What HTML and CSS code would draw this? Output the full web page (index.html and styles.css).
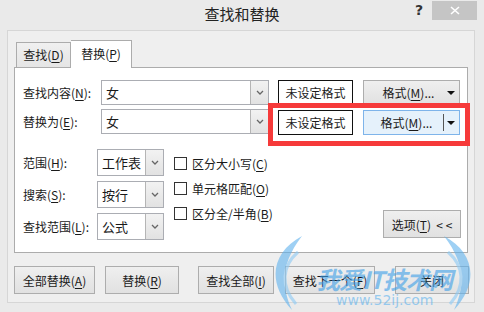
FILE: index.html
```html
<!DOCTYPE html>
<html lang="zh-CN">
<head>
    <meta charset="UTF-8">
    <title>查找和替换</title>
    <link rel="stylesheet" href="styles.css">
</head>
<body>
    <div class="window">
        <div class="titlebar">
            <span></span>
            <span class="title">查找和替换</span>
            <div class="caption-btns">
                <span class="help">?</span>
                <span class="close">
                    <svg width="10" height="9" viewBox="0 0 10 9"><path d="M1 1 L9 8 M9 1 L1 8" stroke="#fff" stroke-width="1.6"/></svg>
                </span>
            </div>
        </div>
        <div class="panel">
            <div class="tabs">
                <div class="tab">查找(<u>D</u>)</div>
                <div class="tab active">替换(<u>P</u>)</div>
            </div>
            <div class="sheet">
                <div class="find-grid">
                    <label>查找内容(<u>N</u>):</label>
                    <div class="combo"><span>女</span><i class="drop"><svg width="8" height="5" viewBox="0 0 8 5"><path d="M1 1 L4 4 L7 1" fill="none" stroke="#666" stroke-width="1.3"/></svg></i></div>
                    <div class="fmt-box">未设定格式</div>
                    <div class="split-btn"><span>格式(<u>M</u>)...</span><i class="tri"></i></div>

                    <label>替换为(<u>E</u>):</label>
                    <div class="combo"><span>女</span><i class="drop"><svg width="8" height="5" viewBox="0 0 8 5"><path d="M1 1 L4 4 L7 1" fill="none" stroke="#666" stroke-width="1.3"/></svg></i></div>
                    <div class="fmt-box low">未设定格式</div>
                    <div class="split-btn hover low"><span>格式(<u>M</u>)...</span><i class="sep"></i><i class="tri"></i></div>
                </div>
                <div class="options">
                    <div class="selects">
                        <label>范围(<u>H</u>):</label>
                        <div class="combo"><span>工作表</span><i class="drop"><svg width="8" height="5" viewBox="0 0 8 5"><path d="M1 1 L4 4 L7 1" fill="none" stroke="#666" stroke-width="1.3"/></svg></i></div>
                        <label>搜索(<u>S</u>):</label>
                        <div class="combo"><span>按行</span><i class="drop"><svg width="8" height="5" viewBox="0 0 8 5"><path d="M1 1 L4 4 L7 1" fill="none" stroke="#666" stroke-width="1.3"/></svg></i></div>
                        <label>查找范围(<u>L</u>):</label>
                        <div class="combo"><span>公式</span><i class="drop"><svg width="8" height="5" viewBox="0 0 8 5"><path d="M1 1 L4 4 L7 1" fill="none" stroke="#666" stroke-width="1.3"/></svg></i></div>
                    </div>
                    <div class="checks">
                        <div class="check"><i class="box"></i><span>区分大小写(<u>C</u>)</span></div>
                        <div class="check"><i class="box"></i><span>单元格匹配(<u>O</u>)</span></div>
                        <div class="check"><i class="box"></i><span>区分全/半角(<u>B</u>)</span></div>
                    </div>
                    <button class="btn opt-btn">选项(<u>T</u>)&nbsp; &lt; &lt;</button>
                </div>
            </div>
            <div class="actions">
                <button class="btn b1">全部替换(<u>A</u>)</button>
                <button class="btn b2">替换(<u>R</u>)</button>
                <button class="btn b3">查找全部(<u>I</u>)</button>
                <button class="btn b4">查找下一个(<u>F</u>)</button>
                <button class="btn b5">关闭</button>
            </div>
        </div>
        <div class="highlight"></div>
        <div class="watermark">
            <svg class="wing left" width="44" height="80" viewBox="0 0 44 80"><path d="M40 4 C10 20 4 50 30 78 C18 52 20 30 40 4 Z" fill="#5fb2ee"/><path d="M36 20 C20 34 18 54 34 72" fill="none" stroke="#8ccaf5" stroke-width="3"/></svg>
            <svg class="wing right" width="44" height="80" viewBox="0 0 44 80"><path d="M4 4 C34 20 40 50 14 78 C26 52 24 30 4 4 Z" fill="#5fb2ee"/><path d="M8 20 C24 34 26 54 10 72" fill="none" stroke="#8ccaf5" stroke-width="3"/></svg>
            <span class="wm-title">我爱IT技术网</span>
            <span class="wm-url">www.52ij.com</span>
        </div>
    </div>
</body>
</html>
```

FILE: styles.css
```css
body {
    margin: 0;
    padding: 0;
    background-color: #ececec;
    font-family: "Noto Sans CJK SC", "Noto Sans", sans-serif;
    font-size: 12px;
    color: #1a1a1a;
}
u {
    text-decoration: underline;
    text-underline-offset: 2px;
}
.window {
    position: relative;
    width: 484px;
    height: 312px;
    overflow: hidden;
    background-color: #eaeaea;
}
.titlebar {
    height: 30px;
    display: grid;
    grid-template-columns: 1fr auto 1fr;
}
.title {
    font-size: 15px;
    line-height: 28px;
    color: #222;
}
.caption-btns {
    display: flex;
    justify-content: flex-end;
    align-items: flex-start;
}
.help {
    font-family: "DejaVu Sans", sans-serif;
    font-weight: bold;
    font-size: 14px;
    line-height: 20px;
    margin-right: 9px;
    color: #333;
}
.close {
    width: 45px;
    height: 19px;
    margin-top: 1px;
    margin-right: 7px;
    background-color: #c5c5c5;
    display: flex;
    align-items: center;
    justify-content: center;
}
.panel {
    margin-left: 7px;
    width: 466px;
    height: 271px;
    border: 1px solid #d6d6d6;
    background-color: #efefef;
}
.tabs {
    display: flex;
    align-items: flex-end;
    padding: 9px 0 0 8px;
    height: 27px;
    position: relative;
    z-index: 1;
}
.tab {
    box-sizing: border-box;
    width: 55px;
    height: 25px;
    border: 1px solid #acacac;
    border-bottom: none;
    background: linear-gradient(#f0f0f0, #e5e5e5);
    text-align: center;
    line-height: 24px;
}
.tab.active {
    width: 61px;
    height: 28px;
    background: #fff;
    border-left: none;
    margin-bottom: -1px;
    line-height: 26px;
}
.sheet {
    box-sizing: border-box;
    margin-left: 6px;
    width: 454px;
    height: 186px;
    border: 1px solid #acacac;
    background-color: #fff;
    padding: 12px 0 0 8px;
}
.find-grid {
    display: grid;
    grid-template-columns: 78px 168px 84px 107px;
    grid-template-rows: 25px 25px;
    row-gap: 4px;
    align-items: center;
}
.find-grid label {
    line-height: 25px;
}
.combo {
    box-sizing: border-box;
    height: 100%;
    border: 1px solid #abadb3;
    background-color: #fff;
    display: flex;
    align-items: stretch;
}
.combo span {
    flex: 1;
    padding-left: 4px;
    line-height: 23px;
    font-size: 13px;
}
.drop {
    width: 17px;
    background: linear-gradient(#f2f2f2, #e2e2e2);
    border-left: 1px solid #b5b5b5;
    display: flex;
    align-items: center;
    justify-content: center;
}
.fmt-box {
    box-sizing: border-box;
    margin-left: 9px;
    width: 75px;
    height: 25px;
    border: 1px solid #111;
    text-align: center;
    line-height: 23px;
}
.fmt-box.low {
    align-self: end;
    transform: translateY(1px);
}
.split-btn {
    box-sizing: border-box;
    margin-left: 10px;
    width: 97px;
    height: 25px;
    border: 1px solid #adadad;
    background: linear-gradient(#efefef, #e1e1e1);
    display: flex;
    align-items: center;
    position: relative;
}
.split-btn span {
    flex: 1;
    text-align: center;
    padding-left: 6px;
}
.split-btn.hover {
    background: #e5f1fb;
    border-color: #7eb4ea;
}
.split-btn.low {
    transform: translateY(1px);
}
.sep {
    width: 1px;
    height: 17px;
    background-color: #555;
    margin-right: 3px;
}
.tri {
    width: 0;
    height: 0;
    border-left: 4px solid transparent;
    border-right: 4px solid transparent;
    border-top: 4px solid #111;
    margin-right: 4px;
}
.options {
    display: flex;
    margin-top: 15px;
    padding-right: 6px;
}
.selects {
    display: grid;
    grid-template-columns: 74px 67px;
    grid-auto-rows: 27px;
    row-gap: 5px;
    align-items: center;
}
.selects label {
    line-height: 27px;
}
.selects .combo span {
    line-height: 25px;
    padding-left: 4px;
}
.checks {
    margin-left: 10px;
    padding-top: 6px;
    display: flex;
    flex-direction: column;
    gap: 8px;
}
.check {
    display: flex;
    align-items: center;
    gap: 5px;
    line-height: 17px;
}
.box {
    box-sizing: border-box;
    width: 13px;
    height: 13px;
    border: 1px solid #333;
    background-color: #fff;
}
.btn {
    box-sizing: border-box;
    height: 28px;
    border: 1px solid #adadad;
    background: linear-gradient(#efefef, #e1e1e1);
    font-family: inherit;
    font-size: 12px;
    color: #1a1a1a;
    padding: 0;
}
.opt-btn {
    width: 78px;
    margin-left: auto;
    align-self: flex-end;
    margin-bottom: 2px;
}
.actions {
    display: flex;
    margin-top: 13px;
    padding-left: 6px;
}
.b1 { width: 81px; }
.b2 { width: 74px; margin-left: 10px; }
.b3 { width: 76px; margin-left: 19px; }
.b4 { width: 90px; margin-left: 11px; }
.b5 { width: 74px; margin-left: 20px; }
.highlight {
    position: absolute;
    left: 268px;
    top: 103px;
    width: 192px;
    height: 33px;
    border: 5px solid #f63a3a;
}
.watermark {
    position: absolute;
    left: 262px;
    top: 232px;
    width: 222px;
    height: 80px;
    opacity: 0.6;
    pointer-events: none;
}
.wing {
    position: absolute;
    top: 0;
}
.wing.left { left: 0; }
.wing.right { right: 0; }
.wm-title {
    position: absolute;
    left: 54px;
    top: 32px;
    font-size: 24px;
    font-weight: bold;
    font-style: italic;
    color: #3d9fe8;
    letter-spacing: -1px;
    line-height: 30px;
}
.wm-url {
    position: absolute;
    left: 74px;
    top: 60px;
    font-family: "DejaVu Sans", sans-serif;
    font-size: 14px;
    color: #5eb3ee;
    line-height: 16px;
}
```
